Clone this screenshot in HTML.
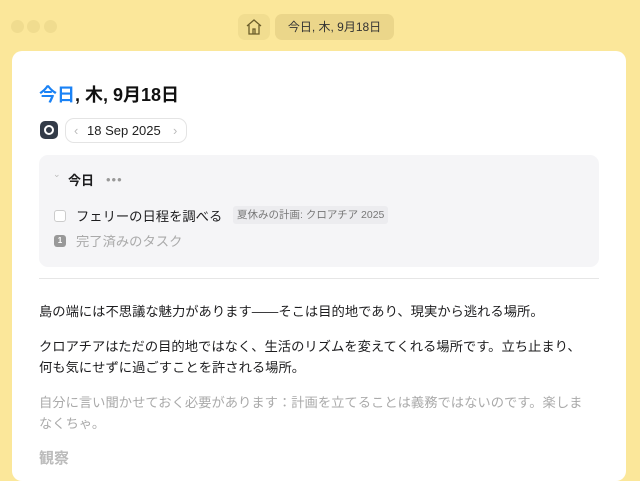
<!DOCTYPE html>
<html><head><meta charset="utf-8"><style>
*{margin:0;padding:0;box-sizing:border-box}
body{width:640px;height:464px;overflow:hidden;background:#fbe79a;font-family:"Liberation Sans","Noto Sans CJK JP",sans-serif;position:relative;color:#1d1d1f}
.dot{position:absolute;top:20px;width:13px;height:13px;border-radius:50%;background:#f0dc8f}
.home{position:absolute;left:238px;top:14px;width:32px;height:26px;border-radius:7px;background:#f1dd90}
.tab{position:absolute;left:275px;top:14px;width:119px;height:26px;border-radius:7px;background:#ebd68a;font-size:12px;line-height:26px;text-align:center;color:#333}
.card{position:absolute;left:12px;top:51px;width:614px;height:430px;background:#fff;border-radius:10px}
.title{position:absolute;left:39px;top:81px;font-size:18px;font-weight:bold;color:#111}
.title span{color:#1a82f5}
.ico{position:absolute;left:40px;top:121px;width:18px;height:18px;border-radius:5px;background:#333b48}
.pill{position:absolute;left:65px;top:118px;width:122px;height:25px;border:1px solid #e4e4e4;border-radius:9px;font-size:13px;line-height:23px;color:#222}
.box{position:absolute;left:39px;top:155px;width:560px;height:112px;background:#f5f5f7;border-radius:9px}
.hr{position:absolute;left:39px;top:278px;width:560px;height:1px;background:#e6e6e6}
p{position:absolute;left:39px;font-size:13.3px;line-height:21px;width:556px}
</style></head><body>
<div class="dot" style="left:11px"></div><div class="dot" style="left:27px"></div><div class="dot" style="left:44px"></div>
<div class="home"><svg width="32" height="26" viewBox="0 0 32 26"><path d="M9 12 L16 6 L23 12 M11 11 V20 H21 V11 M15 20 V15 H17 V20" fill="none" stroke="#6b5d2a" stroke-width="1.3"/></svg></div>
<div class="tab">今日, 木, 9月18日</div>
<div class="card"></div>
<div class="title"><span>今日</span>, 木, 9月18日</div>
<div class="ico"><svg width="18" height="18"><circle cx="9" cy="9" r="4" fill="none" stroke="#fff" stroke-width="2"/></svg></div>
<div class="pill"><span style="position:absolute;left:8px;color:#bbb">‹</span><span style="position:absolute;left:21px">18 Sep 2025</span><span style="position:absolute;left:107px;color:#bbb">›</span></div>
<div class="box">
<span style="position:absolute;left:14px;top:14px;font-size:9px;color:#bbb">⌄</span>
<span style="position:absolute;left:29px;top:15px;font-size:13px;font-weight:bold">今日</span>
<span style="position:absolute;left:67px;top:17px;font-size:13px;color:#999;letter-spacing:1px">•••</span>
<span style="position:absolute;left:15px;top:55px;width:12px;height:12px;border:1px solid #ccc;border-radius:3px;background:#fff"></span>
<span style="position:absolute;left:37px;top:51px;font-size:13.3px">フェリーの日程を調べる</span>
<span style="position:absolute;left:194px;top:51px;height:18px;padding:0 4px;background:#ececef;border-radius:3px;font-size:10.5px;line-height:18px;color:#777">夏休みの計画: クロアチア 2025</span>
<span style="position:absolute;left:15px;top:80px;width:12px;height:12px;border-radius:3px;background:#999;color:#fff;font-size:8px;line-height:12px;text-align:center;font-weight:bold">1</span>
<span style="position:absolute;left:37px;top:76px;font-size:13.3px;color:#aaa">完了済みのタスク</span>
</div>
<div class="hr"></div>
<p style="top:301px">島の端には不思議な魅力があります——そこは目的地であり、現実から逃れる場所。</p>
<p style="top:336px">クロアチアはただの目的地ではなく、生活のリズムを変えてくれる場所です。立ち止まり、<br>何も気にせずに過ごすことを許される場所。</p>
<p style="top:392px;color:#aaa">自分に言い聞かせておく必要があります：計画を立てることは義務ではないのです。楽しま<br>なくちゃ。</p>
<p style="top:448px;color:#bbb;font-size:15px;font-weight:bold">観察</p>
</body></html>
